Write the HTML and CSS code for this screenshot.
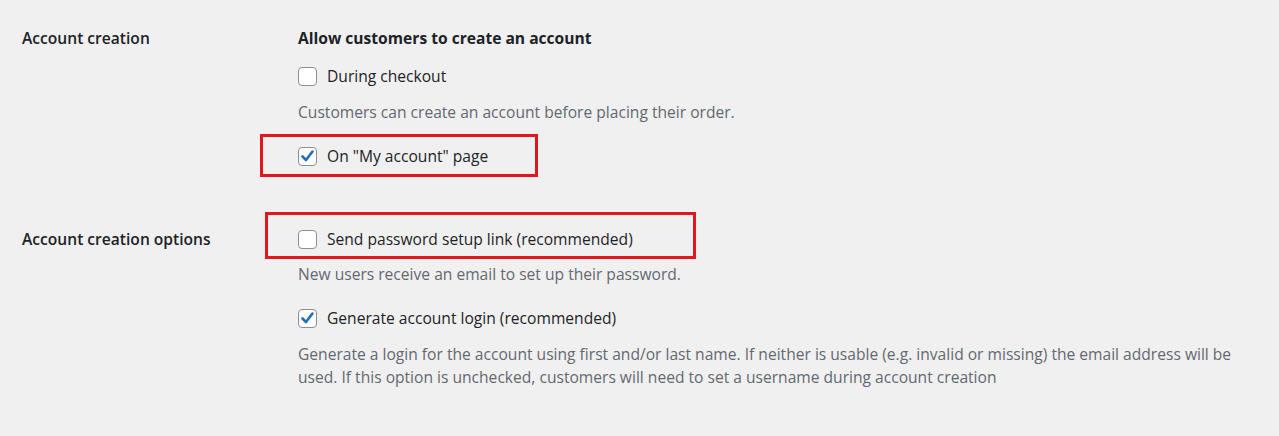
FILE: index.html
```html
<!DOCTYPE html>
<html lang="en">
<head>
    <meta charset="UTF-8">
    <link rel="stylesheet" href="styles.css">
    <title>Accounts &amp; Privacy</title>
</head>
<body>
    <div class="settings">
        <div class="row row-creation">
            <div class="label">Account creation</div>
            <div class="field">
                <div class="legend">Allow customers to create an account</div>
                <label class="check">
                    <span class="box"></span>
                    During checkout
                </label>
                <p class="desc">Customers can create an account before placing their order.</p>
                <label class="check marked highlight hl-account">
                    <span class="box"><svg viewBox="0 0 19 19"><path d="M4.5 9.5 L8 13 L14.5 4.5" /></svg></span>
                    On "My account" page
                </label>
            </div>
        </div>
        <div class="row row-options">
            <div class="label">Account creation options</div>
            <div class="field">
                <label class="check highlight hl-password">
                    <span class="box"></span>
                    Send password setup link (recommended)
                </label>
                <p class="desc">New users receive an email to set up their password.</p>
                <label class="check marked">
                    <span class="box"><svg viewBox="0 0 19 19"><path d="M4.5 9.5 L8 13 L14.5 4.5" /></svg></span>
                    Generate account login (recommended)
                </label>
                <p class="desc">Generate a login for the account using first and/or last name. If neither is usable (e.g. invalid or missing) the email address will be used. If this option is unchecked, customers will need to set a username during account creation</p>
            </div>
        </div>
    </div>
</body>
</html>
```

FILE: styles.css
```css
*{
    margin: 0;
    padding: 0;
    box-sizing: border-box;
}
body{
    background: #f0f0f1;
    color: #1d2327;
    font-family: "Open Sans", "Noto Sans", sans-serif;
    font-size: 15.6px;
    line-height: 23px;
}
.settings{
    padding: 27px 0 0 22px;
}
.row{
    display: flex;
}
.row-options{
    margin-top: 60px;
}
.label{
    width: 276px;
    flex-shrink: 0;
    font-weight: 600;
}
.field{
    width: 955px;
}
.legend{
    font-weight: 700;
}
.check{
    display: flex;
    align-items: center;
    height: 23px;
    cursor: pointer;
}
.legend + .check{
    margin-top: 15px;
}
.check + .desc{
    margin-top: 13px;
}
.desc + .check{
    margin-top: 21px;
}
.row-options .check + .desc{
    margin-top: 12px;
}
.row-options .marked + .desc{
    margin-top: 13px;
}
.box{
    width: 19px;
    height: 19px;
    margin-right: 10px;
    background: #fff;
    border: 1px solid #8c8f94;
    border-radius: 4px;
    display: flex;
    align-items: center;
    justify-content: center;
}
.box svg{
    width: 19px;
    height: 19px;
    margin: -1px;
}
.box path{
    fill: none;
    stroke: #2271b1;
    stroke-width: 2.6;
    stroke-linecap: round;
    stroke-linejoin: round;
}
.desc{
    color: #646970;
}
.highlight{
    position: relative;
}
.highlight::after{
    content: "";
    position: absolute;
    box-sizing: border-box;
    border: 3px solid #e3161f;
    pointer-events: none;
}
.hl-account::after{
    left: -38px;
    top: -11px;
    width: 278px;
    height: 43px;
}
.hl-password::after{
    left: -33px;
    top: -16px;
    width: 431px;
    height: 47px;
}
```
